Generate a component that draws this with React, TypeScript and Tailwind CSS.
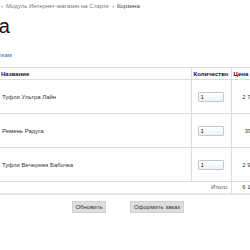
const items = [
  { name: "Туфли Ультра Лайн", qty: 1, price: "2 790 руб." },
  { name: "Ремень Радуга", qty: 1, price: "390 руб." },
  { name: "Туфли Вечерняя Бабочка", qty: 1, price: "2 990 руб." },
];

export default function App() {
  return (
    <div className="h-[250px] w-[250px] overflow-hidden bg-white font-['Liberation_Sans',Arial,sans-serif] text-[#333]">
      <div className="whitespace-nowrap pl-[1px] pt-[2px] text-[6px] leading-[8px] text-[#777]">
        <span>›</span>
        <span className="ml-[3px]">Модуль Интернет-магазин на Старте</span>
        <span className="mx-[3px]">›</span>
        <span className="text-[#444]">Корзина</span>
      </div>

      <div className="mt-[4px] flex w-[10px] justify-end overflow-hidden whitespace-nowrap text-[20px] leading-[24px] text-[#111]">
        Корзина
      </div>

      <div className="mt-[13px] flex w-[12px] justify-end overflow-hidden whitespace-nowrap text-[6px] leading-[8px] text-[#2f6fb4]">
        Вернуться к покупкам
      </div>

      <table className="mt-[8px] w-[281px] table-fixed border-collapse text-[6px] leading-[8px]">
        <colgroup>
          <col className="w-[191px]" />
          <col className="w-[40px]" />
          <col className="w-[50px]" />
        </colgroup>
        <thead>
          <tr className="h-[12px] border-y border-[#ddd]">
            <th className="pl-[1px] text-left font-bold text-[#111]">Название</th>
            <th className="border-x border-[#ddd] pl-[2px] text-left font-bold text-[#111]">Количество</th>
            <th className="pl-[2px] text-left font-bold text-[#111]">Цена</th>
          </tr>
        </thead>
        <tbody>
          {items.map((it) => (
            <tr key={it.name} className="h-[34px] border-b border-[#ddd]">
              <td className="pl-[2px]">{it.name}</td>
              <td className="border-x border-[#ddd]">
                <input
                  readOnly
                  value={it.qty}
                  className="ml-[6px] block h-[10px] w-[26px] rounded-[1px] border border-[#c8c8c8] bg-gradient-to-b from-white to-[#eef3f8] pl-[2px] text-[6px] text-[#111] outline-none"
                />
              </td>
              <td className="whitespace-nowrap text-center">{it.price}</td>
            </tr>
          ))}
          <tr className="h-[12px] border-b-[2px] border-[#e6e6e6]">
            <td colSpan={2} className="border-r border-[#ddd] pr-[2px] text-right text-[#555]">
              Итого:
            </td>
            <td className="whitespace-nowrap text-center">6 170 руб.</td>
          </tr>
        </tbody>
      </table>

      <div className="ml-[72px] mt-[6px] flex gap-[24px] text-[6px] leading-[8px]">
        <button className="h-[12px] w-[34px] border border-[#d0d0d0] bg-[#dedede] text-[#333]">Обновить</button>
        <button className="h-[12px] w-[54px] border border-[#d0d0d0] bg-[#dedede] text-[#333]">Оформить заказ</button>
      </div>
    </div>
  );
}
